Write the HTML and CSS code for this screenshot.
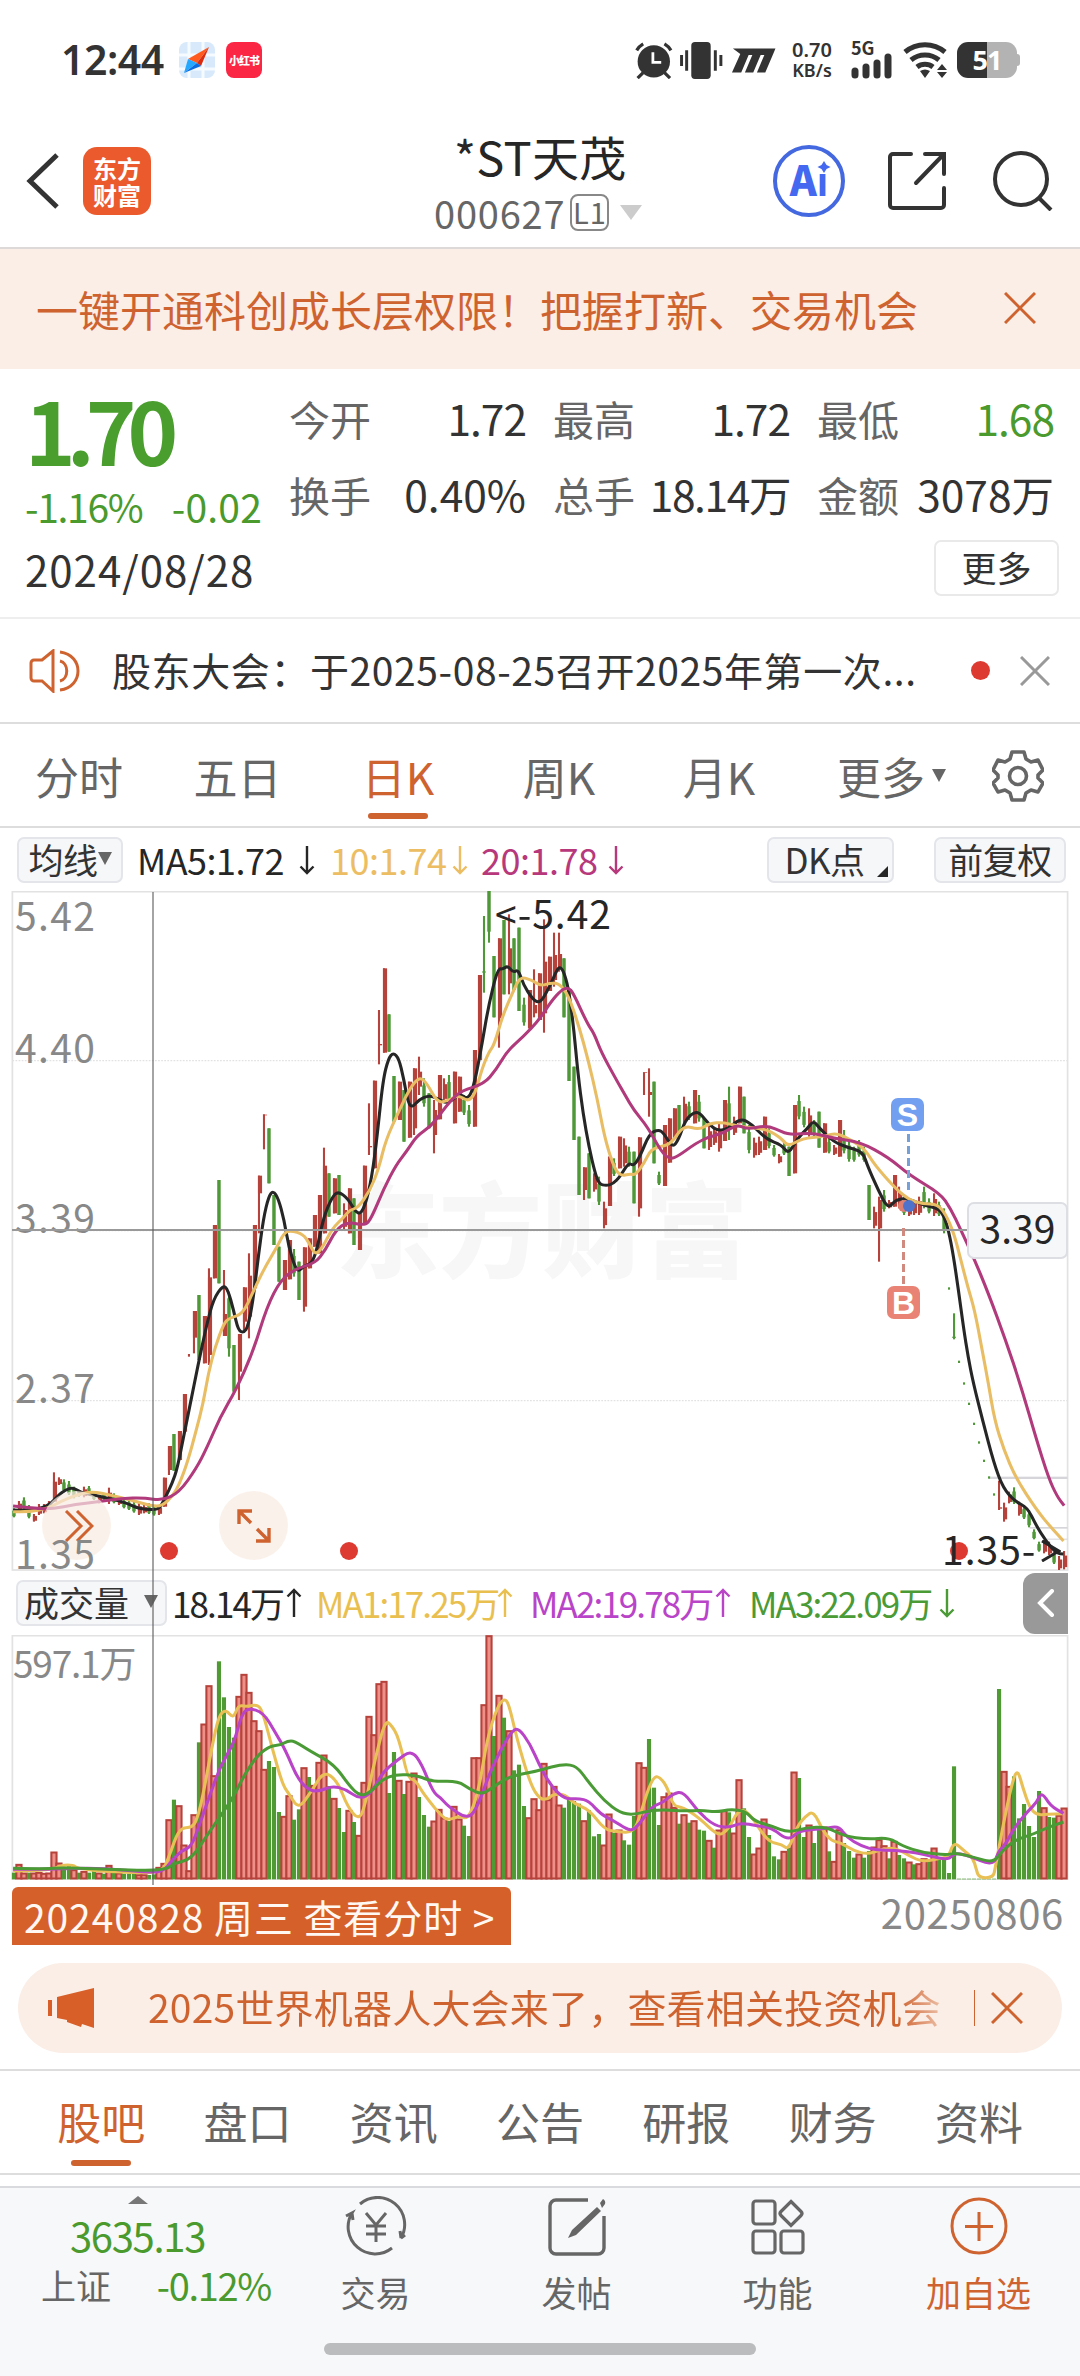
FILE: index.html
```html
<!DOCTYPE html>
<html lang="zh-CN">
    <head>
        <title>*ST天茂 000627</title>
        <meta charset="UTF-8">
        <meta name="viewport" content="width=device-width, initial-scale=1.0">
        <link rel="stylesheet" href="styles.css">
        <script src="chart.js" defer></script>
    </head>
    <body>
        <svg class="defs">
            <symbol id="down" viewBox="0 0 16 30"><path d="M8 1v27M1.500 21.500L8 28l6.500-6.500" fill="none" stroke="currentColor" stroke-width="2.400"/></symbol>
            <symbol id="up" viewBox="0 0 16 30"><path d="M8 29V2M1.500 8.500L8 2l6.500 6.500" fill="none" stroke="currentColor" stroke-width="2.400"/></symbol>
        </svg>

        <div class="statusbar">
            <div class="clock">12:44</div>
            <svg class="app-icon" viewBox="0 0 36 36">
                <rect width="36" height="36" rx="8" fill="#d7e9fa"/>
                <path d="M10 0v36M24 0v36M0 13h36M0 27h36" stroke="#f6fbff" stroke-width="3"/>
                <path d="M30 5L9 17l9 4z" fill="#ff5a1f"/>
                <path d="M30 5L18 21l4 3z" fill="#d92c10"/>
                <path d="M5 31L9 17l9 4z" fill="#26a8ff"/>
                <path d="M5 31L18 21l4 3z" fill="#0a6ce0"/>
            </svg>
            <div class="app-icon red">小红书</div>
            <svg class="status-icons" viewBox="0 0 160 40">
                <g fill="#333">
                    <circle cx="22.500" cy="21" r="17.500"/>
                    <path d="M11 33l-6 6M34 33l6 6M4 9a20 20 0 0 1 7-7M34 2a20 20 0 0 1 7 7" stroke="#333" stroke-width="3.500" fill="none"/>
                    <path d="M21.500 11v11h9" stroke="#fff" stroke-width="3" fill="none"/>
                    <rect x="63" y="0" width="21" height="40" rx="4"/>
                    <path d="M58 9v22M52.500 14v12M89 9v22M95 14v12" stroke="#333" stroke-width="3.200"/>
                    <path d="M108 7h46l-2 5-9 21h-9l8-19h-4l-8 19h-9l8-19h-4l-8 19h-10l9-20z"/>
                </g>
            </svg>
            <div class="speed"><div>0.70</div><div>KB/s</div></div>
            <div class="signal">
                <span>5G</span>
                <svg viewBox="0 0 42 26"><path d="M4 18v4M15 14v8M26 10v12M37 4v18" stroke="#333" stroke-width="7" stroke-linecap="round"/></svg>
            </div>
            <svg class="wifi" viewBox="0 0 46 38">
                <g fill="none" stroke="#333" stroke-width="5">
                    <path d="M2 11a31 31 0 0 1 40 0M8 19a22 22 0 0 1 28 0M14 26a13 13 0 0 1 16 0"/>
                </g>
                <path d="M17 30q5-3 10 0l-5 7zM34 29l5-6 5 6zM34 31l5 6 5-6z" fill="#333"/>
            </svg>
            <div class="battery"><span>51</span></div>
        </div>

        <div class="header">
            <svg class="back" viewBox="0 0 34 56"><path d="M31 2L4 28l27 26" fill="none" stroke="#333" stroke-width="5"/></svg>
            <div class="brand">东方<br>财富</div>
            <div class="stock">
                <div class="stock-name">*ST天茂</div>
                <div class="stock-code">000627<span class="level">L1</span><i class="tri"></i></div>
            </div>
            <div class="ai">
                <svg viewBox="0 0 72 72">
                    <circle cx="36" cy="36" r="34" fill="none" stroke="#4468e0" stroke-width="4"/>
                    <path d="M51 16l2.500 4 4 2-4 2-2.500 4-2.500-4-4-2 4-2z" fill="#4468f0"/>
                </svg>
                <span>Aı</span>
            </div>
            <svg class="share" viewBox="0 0 60 60"><path d="M24 3H6a3 3 0 0 0-3 3v48a3 3 0 0 0 3 3h48a3 3 0 0 0 3-3V37M38 3h19v20M56 4L29 32" fill="none" stroke="#333" stroke-width="4" stroke-linecap="round"/></svg>
            <svg class="search" viewBox="0 0 60 60"><circle cx="28" cy="28" r="26" fill="none" stroke="#333" stroke-width="4"/><path d="M45 46l13 13" stroke="#333" stroke-width="4"/></svg>
        </div>

        <div class="banner">
            <div>一键开通科创成长层权限！把握打新、交易机会</div>
            <svg class="close" viewBox="0 0 32 32"><path d="M1 1l30 30M31 1L1 31" stroke="#cf6330" stroke-width="3"/></svg>
        </div>

        <div class="quote">
            <div class="price-col">
                <div class="price">1.70</div>
                <div class="change"><span>-1.16%</span><span>-0.02</span></div>
            </div>
            <div class="stats">
                <div class="stat"><span>今开</span><b class="n">1.72</b></div>
                <div class="stat"><span>最高</span><b class="n">1.72</b></div>
                <div class="stat"><span>最低</span><b class="n green">1.68</b></div>
                <div class="stat"><span>换手</span><b>0.40%</b></div>
                <div class="stat"><span>总手</span><b class="w">18.14万</b></div>
                <div class="stat"><span>金额</span><b>3078万</b></div>
            </div>
            <div class="quote-date">2024/08/28</div>
            <div class="more-btn">更多</div>
        </div>

        <div class="notice">
            <svg class="horn" viewBox="0 0 52 44">
                <g fill="none" stroke="#cf6330" stroke-width="3">
                    <path d="M24 2L13 11H5a3 3 0 0 0-3 3v15a3 3 0 0 0 3 3h8l11 10z"/>
                    <path d="M31 12c9 2 9 18 0 20M31 3c24 3 24 35 0 38"/>
                </g>
            </svg>
            <div class="notice-text">股东大会：于2025-08-25召开2025年第一次...</div>
            <i class="red-dot"></i>
            <svg class="close-grey" viewBox="0 0 30 30"><path d="M1 1l28 28M29 1L1 29" stroke="#999" stroke-width="3"/></svg>
        </div>

        <div class="periods">
            <div>分时</div>
            <div>五日</div>
            <div class="active">日K</div>
            <div>周K</div>
            <div>月K</div>
            <div>更多<i class="tri dark"></i></div>
            <svg class="gear" viewBox="0 0 52 52">
                <path d="M20 2h12l2 7 5 3 7-2 5 10-5 5v3l5 5-5 9-7-2-5 3-2 7H20l-2-7-5-3-7 2-5-9 5-5v-3l-5-5 5-10 7 2 5-3z" fill="none" stroke="#666" stroke-width="3.600" stroke-linejoin="round"/>
                <circle cx="26" cy="26" r="8.500" fill="none" stroke="#666" stroke-width="3.600"/>
            </svg>
        </div>

        <div class="ma-row">
            <div class="chip">均线<i class="tri dark"></i></div>
            <div class="c-black">MA5:1.72</div><svg class="arr c-black"><use href="#down"/></svg>
            <div class="c-gold">10:1.74</div><svg class="arr c-gold"><use href="#down"/></svg>
            <div class="c-pink">20:1.78</div><svg class="arr c-pink"><use href="#down"/></svg>
            <div class="chip dk">DK点<i class="corner"></i></div>
            <div class="chip fq">前复权</div>
        </div>

        <div class="charts">
            <div class="kline">
                <div class="watermark">东方财富</div>
                <svg class="plot" id="kline" viewBox="0 33 3136 2040" preserveAspectRatio="none"></svg>
                <div class="round r1"><svg viewBox="0 0 30 32"><path d="M2 1l15 15L2 31M13 1l15 15-15 15" fill="none" stroke="#cf6330" stroke-width="3"/></svg></div>
                <div class="round r2"><svg viewBox="0 0 34 34"><path d="M2 15V2h13M2 2l12 12M32 19v13H19M32 32L20 20" fill="none" stroke="#cf6330" stroke-width="3.400"/></svg></div>
                <div class="axis a1">5.42</div>
                <div class="axis a2">4.40</div>
                <div class="axis a3">3.39</div>
                <div class="axis a4">2.37</div>
                <div class="axis a5">1.35</div>
                <div class="cross-h"></div>
                <div class="mark high">&lt;-5.42</div>
                <div class="cross-label">3.39</div>
                <div class="trade s">S</div>
                <div class="trade-line s"></div>
                <div class="trade b">B</div>
                <div class="trade-line b"></div>
                <div class="trade-dot b"></div>
                <div class="trade-dot s"></div>
                <i class="event e1"></i>
                <i class="event e2"></i>
                <i class="event e3"></i>
                <div class="mark low">1.35-<svg viewBox="0 0 20 22"><path d="M1 1l17 10L1 21" fill="none" stroke="#262626" stroke-width="3"/></svg></div>
            </div>
            <div class="vol-row">
                <div class="chip">成交量<i class="tri dark"></i></div>
                <div class="c-black">18.14万</div><svg class="arr c-black"><use href="#up"/></svg>
                <div class="c-yellow">MA1:17.25万</div><svg class="arr c-yellow"><use href="#up"/></svg>
                <div class="c-purple">MA2:19.78万</div><svg class="arr c-purple"><use href="#up"/></svg>
                <div class="c-green">MA3:22.09万</div><svg class="arr c-green"><use href="#down"/></svg>
                <div class="fold"><svg viewBox="0 0 18 28"><path d="M15 2L3 14l12 12" fill="none" stroke="#fff" stroke-width="4" stroke-linecap="round"/></svg></div>
            </div>
            <div class="volume">
                <svg class="plot" id="volume" viewBox="0 222 3136 735" preserveAspectRatio="none"></svg>
                <div class="axis v1">597.1万</div>
            </div>
            <div class="cross-v"></div>
        </div>

        <div class="dates">
            <div class="date-tag">20240828 周三 查看分时 &gt;</div>
            <div class="date-end">20250806</div>
        </div>

        <div class="promo">
            <svg class="speaker" viewBox="0 0 46 40"><path d="M9 9L46 0v40l-12-4-1 3-14-5v-2L9 30zM0 12h4v16H0z" fill="#d95f28"/></svg>
            <div class="promo-text">2025世界机器人大会来了，查看相关投资机会</div>
            <i class="divider"></i>
            <svg class="close" viewBox="0 0 32 32"><path d="M1 1l30 30M31 1L1 31" stroke="#cf6330" stroke-width="3"/></svg>
        </div>

        <div class="tabs">
            <div class="active">股吧</div>
            <div>盘口</div>
            <div>资讯</div>
            <div>公告</div>
            <div>研报</div>
            <div>财务</div>
            <div>资料</div>
        </div>

        <div class="bottom">
            <div class="nav">
                <div class="index">
                    <i class="tri up"></i>
                    <div class="index-value">3635.13</div>
                    <div class="index-row"><span>上证</span><span class="green">-0.12%</span></div>
                </div>
                <div class="nav-item">
                    <svg viewBox="0 0 64 60">
                        <g fill="none" stroke="#666" stroke-width="3">
                            <path d="M16 8A27 27 0 0 1 57 42l4-3M57 42l-1-7M48 52A27 27 0 0 1 8 17l-6 3M8 17l1 7"/>
                            <path d="M22 17l10 12 10-12M22 30h20M22 38h20M32 29v17"/>
                        </g>
                    </svg>
                    <div>交易</div>
                </div>
                <div class="nav-item">
                    <svg viewBox="0 0 64 60">
                        <path d="M43 4H11a6 6 0 0 0-6 6v42a6 6 0 0 0 6 6h42a6 6 0 0 0 6-6V20" fill="none" stroke="#666" stroke-width="3.400"/>
                        <path d="M55 7l3-4q3 2 2 5l-3 4zM52 11l4 4-25 24-8 3 4-8z" fill="#666"/>
                    </svg>
                    <div>发帖</div>
                </div>
                <div class="nav-item">
                    <svg viewBox="0 0 64 60">
                        <g fill="none" stroke="#666" stroke-width="3.200">
                            <rect x="7" y="5" width="22" height="23" rx="3"/>
                            <path d="M45 5.500l10 10q2 2 0 4l-10 10-10-10q-2-2 0-4z"/>
                            <rect x="7" y="35" width="22" height="22" rx="3"/>
                            <rect x="35" y="35" width="22" height="22" rx="3"/>
                        </g>
                    </svg>
                    <div>功能</div>
                </div>
                <div class="nav-item orange">
                    <svg viewBox="0 0 64 60"><path d="M32 16v29M18 30.500h28" stroke="#cf6330" stroke-width="3"/><circle cx="32" cy="30" r="27" fill="none" stroke="#cf6330" stroke-width="3"/></svg>
                    <div>加自选</div>
                </div>
            </div>
            <div class="home-bar"></div>
        </div>
    </body>
</html>
```

FILE: styles.css
```css
* {
    box-sizing: border-box;
}

body {
    margin: 0;
    width: 1080px;
    height: 2376px;
    overflow: hidden;
    background-color: #fff;
    font-family: 'Noto Sans CJK SC', sans-serif;
    font-size: 42px;
    line-height: 1;
    color: #333;
    white-space: nowrap;
}

i {
    font-style: normal;
}

svg {
    display: block;
    flex: none;
}

.defs {
    display: none;
}

.green {
    color: #4a9a2e;
}

.tri {
    display: block;
    border: 11px solid transparent;
    border-top: 15px solid #ccc;
    border-bottom: 0;
}
.tri.dark {
    border-width: 13px 7px 0 7px;
    border-top-color: #666;
}
.tri.up {
    border-width: 0 10px 8px 10px;
    border-bottom: 8px solid #777;
}

/* status bar */
.statusbar {
    display: flex;
    align-items: center;
    height: 120px;
    padding-left: 61px;
}
.clock {
    width: 118px;
    padding-bottom: 2px;
    font-family: 'Noto Sans', sans-serif;
    font-size: 41px;
    font-weight: 600;
    letter-spacing: -0.5px;
}
.app-icon {
    width: 36px;
    height: 36px;
}
.app-icon.red {
    margin-left: 11px;
    border-radius: 8px;
    background-color: #fb2544;
    color: #fff;
    font-size: 11px;
    font-weight: 900;
    line-height: 36px;
    text-align: center;
    letter-spacing: -1px;
}
.status-icons {
    width: 148px;
    height: 37px;
    margin-left: 371px;
}
.speed {
    width: 62px;
    font-family: 'Noto Sans', sans-serif;
    font-size: 20px;
    font-weight: 600;
    line-height: 20px;
    text-align: center;
}
.speed div + div {
    font-size: 18px;
}
.signal {
    width: 48px;
    margin-left: 8px;
    font-size: 18px;
    font-weight: 700;
}
.signal span {
    display: block;
    height: 12px;
    line-height: 12px;
}
.signal svg {
    width: 42px;
    height: 26px;
}
.wifi {
    width: 46px;
    height: 38px;
    margin-left: 4px;
}
.battery {
    position: relative;
    width: 60px;
    height: 36px;
    margin-left: 8px;
    border-radius: 11px;
    background: linear-gradient(90deg, #333 50%, #b3b3b3 50%);
    color: #fff;
    font-family: 'Noto Sans', sans-serif;
    font-size: 27px;
    font-weight: 700;
    line-height: 35px;
    text-align: center;
    letter-spacing: -1px;
}
.battery::after {
    content: '';
    position: absolute;
    top: 12px;
    right: -3px;
    width: 3px;
    height: 12px;
    border-radius: 0 3px 3px 0;
    background-color: #b3b3b3;
}

/* title bar */
.header {
    display: flex;
    align-items: center;
    height: 129px;
    padding: 0 27px 5px 26px;
    border-bottom: 2px solid #ddd9d8;
}
.back {
    width: 34px;
    height: 56px;
}
.brand {
    width: 68px;
    height: 68px;
    margin-left: 23px;
    padding-top: 7px;
    border-radius: 14px;
    background-color: #ea5a2c;
    color: #fff;
    font-size: 24px;
    font-weight: 700;
    line-height: 27px;
    text-align: center;
}
.stock {
    width: 320px;
    margin-left: 228px;
    padding: 3px 0 0 55px;
}
.stock-name {
    margin-left: 20px;
    font-size: 47px;
    line-height: 60px;
    letter-spacing: 0.3px;
    color: #262626;
}
.stock-code {
    display: flex;
    align-items: center;
    font-size: 38px;
    line-height: 54px;
    letter-spacing: 0.8px;
    color: #666;
}
.level {
    width: 39px;
    height: 37px;
    margin: 0 11px 0 5px;
    border: 2px solid #888;
    border-radius: 8px;
    font-size: 29px;
    line-height: 30px;
    text-align: center;
}
.ai {
    position: relative;
    width: 72px;
    height: 72px;
    margin-left: 74px;
    color: #4468f0;
    font-size: 41px;
    font-weight: 900;
    line-height: 67px;
    text-align: center;
}
.ai svg {
    position: absolute;
    top: 0;
    left: 0;
    width: 72px;
    height: 72px;
}
.share {
    width: 60px;
    height: 60px;
    margin-left: 42px;
}
.search {
    width: 60px;
    height: 60px;
    margin-left: auto;
}

.banner {
    display: flex;
    align-items: center;
    justify-content: space-between;
    height: 120px;
    padding: 0 44px 1px 36px;
    background-color: #fbeee6;
    color: #cf6330;
}
.close {
    width: 32px;
    height: 32px;
    margin-bottom: 1px;
}

/* quote */
.quote {
    display: grid;
    grid-template-columns: 264px 1fr;
    grid-template-rows: 168px 72px;
    height: 250px;
    padding: 0 24px 0 25px;
    border-bottom: 2px solid #eee;
}
.price {
    padding-top: 12px;
    color: #4a9e2d;
    font-size: 86px;
    font-weight: 600;
    line-height: 96px;
    letter-spacing: -9px;
}
.change {
    display: flex;
    justify-content: space-between;
    width: 237px;
    color: #4a9a2e;
    font-size: 39px;
    line-height: 58px;
    letter-spacing: -1.3px;
}
.change span + span {
    letter-spacing: 0.2px;
}
.stats {
    display: grid;
    grid-template-columns: 237px 237px 237px;
    grid-template-rows: 76px 76px;
    column-gap: 27px;
    padding-top: 11px;
}
.stat {
    display: flex;
    justify-content: space-between;
    align-items: center;
    color: #666;
    font-size: 41px;
}
.stat b {
    color: #333;
    font-size: 42.5px;
    font-weight: 400;
}
.stat .n {
    letter-spacing: -1px;
}
.stat .w {
    letter-spacing: -1.4px;
}
.stat b.green {
    color: #4a9a2e;
}
.quote-date {
    line-height: 64px;
    letter-spacing: 1px;
}
.more-btn {
    justify-self: end;
    width: 125px;
    height: 56px;
    margin: 3px -3px 0 0;
    border: 2px solid #e9e9e9;
    border-radius: 7px;
    font-size: 35px;
    line-height: 49px;
    text-align: center;
}

.notice {
    display: flex;
    align-items: center;
    height: 105px;
    padding: 0 30px 0 29px;
    border-bottom: 2px solid #ddd;
    font-size: 39px;
}
.horn {
    width: 52px;
    height: 44px;
}
.notice-text {
    width: 859px;
    padding: 0 0 3px 31px;
    letter-spacing: 0.6px;
}
.red-dot {
    width: 19px;
    height: 19px;
    margin-left: 31px;
    border-radius: 50%;
    background-color: #dd3b32;
}
.close-grey {
    width: 30px;
    height: 30px;
    margin-left: auto;
}

/* period tabs */
.periods {
    display: grid;
    grid-template-columns: 158px 159px 162px 160px 160px 185px 96px;
    height: 104px;
    border-bottom: 2px solid #ddd;
    color: #666;
    font-size: 44px;
    text-align: center;
}
.periods > div {
    display: flex;
    align-items: center;
    justify-content: center;
    gap: 7px;
    height: 103px;
}
.periods .active,
.tabs .active {
    position: relative;
    color: #cf6330;
}
.periods .active::after,
.tabs .active::after {
    content: '';
    position: absolute;
    left: 50%;
    bottom: 8px;
    width: 60px;
    height: 6px;
    margin-left: -30px;
    border-radius: 3px;
    background-color: #cf6330;
}
.gear {
    width: 52px;
    height: 52px;
    margin: 26px 0 0 8px;
}

.chip {
    display: flex;
    align-items: center;
    justify-content: center;
    height: 46px;
    padding-bottom: 3px;
    border: 2px solid #e3e5ea;
    border-radius: 7px;
    background-color: #f6f7f9;
    color: #333;
    font-size: 35px;
}
.ma-row,
.vol-row {
    display: grid;
    align-items: center;
    color: #262626;
    font-size: 36px;
}
.ma-row > div,
.vol-row > div {
    margin-top: -2px;
}
.ma-row > .chip,
.vol-row > .chip,
.vol-row > .fold {
    margin-top: 0;
}
.ma-row {
    grid-template-columns: 106px 14px 162px 31px 122px 29px 127px 159px 127px 40px 132px;
    height: 63px;
    padding-left: 17px;
    letter-spacing: -0.5px;
}
.ma-row > :nth-child(2) {
    grid-column: 3;
}
.ma-row .dk {
    position: relative;
    grid-column: 9;
    padding-right: 12px;
}
.ma-row .fq {
    grid-column: 11;
}
.corner {
    position: absolute;
    right: 4px;
    bottom: 4px;
    border-left: 11px solid transparent;
    border-bottom: 11px solid #262626;
}
.arr {
    width: 16px;
    height: 30px;
}
.c-gold { color: #ecbd62; }
.c-yellow { color: #e9c050; }
.c-pink { color: #b8387c; }
.c-purple { color: #b944c8; }
.c-green { color: #4a9a36; }
.c-black { color: #262626; }

/* charts */
.charts {
    position: relative;
    width: 1080px;
}
.kline,
.volume {
    position: relative;
}
.kline {
    height: 680px;
}
.volume {
    height: 245px;
}
.plot {
    position: absolute;
    top: 0;
    left: 0;
    width: 1080px;
    height: 100%;
}
.watermark {
    position: absolute;
    left: 336px;
    top: 283px;
    color: #f7f7f7;
    font-size: 103px;
    font-weight: 900;
}
.axis {
    position: absolute;
    left: 15px;
    color: #888;
    font-size: 39px;
    letter-spacing: 1.4px;
}
.a1 { top: 4px; }
.a2 { top: 136px; }
.a3 { top: 306px; }
.a4 { top: 476px; }
.a5 { top: 642px; }
.v1 {
    left: 13px;
    top: 9px;
    font-size: 37px;
    letter-spacing: -1.2px;
}
.cross-h {
    position: absolute;
    left: 12px;
    top: 338px;
    width: 956px;
    height: 2px;
    background-color: #999;
}
.cross-v {
    position: absolute;
    left: 152px;
    top: 1px;
    width: 2px;
    height: 993px;
    background-color: rgba(90, 90, 90, 0.55);
}
.mark {
    position: absolute;
    display: flex;
    align-items: center;
    color: #262626;
    font-size: 39px;
    letter-spacing: 1px;
}
.mark.high {
    left: 495px;
    top: 2px;
}
.mark.low {
    left: 942px;
    top: 638px;
}
.mark.low svg {
    width: 20px;
    height: 22px;
    margin: 5px 0 0 5px;
}
.cross-label {
    position: absolute;
    left: 967px;
    top: 311px;
    width: 101px;
    height: 57px;
    border: 2px solid #dcdee4;
    border-radius: 7px;
    background-color: #f6f7f9;
    color: #262626;
    font-size: 39px;
    line-height: 47px;
    text-align: center;
}
.trade {
    position: absolute;
    width: 33px;
    height: 33px;
    border-radius: 7px;
    color: #fff;
    font-family: 'Liberation Sans', sans-serif;
    font-size: 32px;
    font-weight: 700;
    line-height: 34px;
    text-align: center;
}
.trade.s {
    left: 891px;
    top: 207px;
    background-color: #729ff0;
}
.trade.b {
    left: 887px;
    top: 395px;
    background-color: #e88375;
}
.trade-line {
    position: absolute;
    width: 3px;
    height: 57px;
}
.trade-line.s {
    left: 907px;
    top: 243px;
    background: repeating-linear-gradient(#78a0d8 0 8px, transparent 8px 12px);
}
.trade-line.b {
    left: 902px;
    top: 337px;
    background: repeating-linear-gradient(#d18a80 0 8px, transparent 8px 12px);
}
.trade-dot {
    position: absolute;
    top: 309px;
    width: 12px;
    height: 12px;
    border-radius: 50%;
}
.trade-dot.s {
    left: 903px;
    background-color: #4f73cc;
}
.trade-dot.b {
    left: 898px;
    background-color: #e08070;
}
.round {
    position: absolute;
    top: 600px;
    display: flex;
    align-items: center;
    justify-content: center;
    width: 69px;
    height: 69px;
    border-radius: 50%;
    background-color: rgba(250, 235, 226, 0.7);
}
.r1 { left: 42px; }
.r2 { left: 219px; }
.r1 svg {
    width: 30px;
    height: 32px;
    margin-left: 5px;
}
.r2 svg {
    width: 34px;
    height: 34px;
}
.event {
    position: absolute;
    top: 651px;
    width: 18px;
    height: 18px;
    border-radius: 50%;
    background-color: #dd3b32;
}
.e1 { left: 160px; }
.e2 { left: 340px; }
.e3 { left: 950px; }

.vol-row {
    grid-template-columns: 151px 5px 114px 30px 181px 33px 185px 34px 190px 34px 1fr 45px;
    height: 64px;
    padding: 0 12px 0 16px;
    font-size: 35px;
    letter-spacing: -1.9px;
}
.vol-row .chip {
    justify-content: space-between;
    padding: 0 7px 3px 6px;
    letter-spacing: 0;
}
.vol-row > :nth-child(2) {
    grid-column: 3;
}
.fold {
    grid-column: 12;
    display: flex;
    align-items: center;
    justify-content: center;
    height: 61px;
    border-radius: 12px 0 0 12px;
    background-color: #999;
}
.fold svg {
    width: 18px;
    height: 28px;
}

.dates {
    display: flex;
    align-items: center;
    justify-content: space-between;
    height: 58px;
    margin: 7px 0 0 12px;
    padding-right: 16px;
    color: #888;
    font-size: 40px;
}
.date-tag {
    width: 499px;
    height: 58px;
    padding-left: 12px;
    border-radius: 6px 6px 0 0;
    background-color: #d66029;
    color: #fff8f2;
    font-size: 39px;
    line-height: 58px;
    letter-spacing: 0.9px;
}
.date-end {
    padding-bottom: 9px;
    letter-spacing: 0.7px;
}

.promo {
    display: flex;
    align-items: center;
    height: 90px;
    margin: 18px 18px 16px;
    padding: 0 38px 0 30px;
    border-radius: 45px;
    background-color: #fbeee6;
    color: #cf6330;
    font-size: 39px;
}
.speaker {
    width: 46px;
    height: 40px;
}
.promo-text {
    width: 826px;
    padding-bottom: 4px;
    margin-left: 54px;
    line-height: 64px;
    letter-spacing: 0.2px;
    background: linear-gradient(90deg, #cf6330 750px, #f0cdb8 800px);
    -webkit-background-clip: text;
    color: transparent;
}
.divider {
    width: 1px;
    height: 36px;
    margin-right: 16px;
    background-color: #cf6330;
}

/* content tabs */
.tabs {
    display: grid;
    grid-template-columns: repeat(7, 146.3px);
    height: 106px;
    padding-left: 28px;
    border-top: 2px solid #ddd;
    border-bottom: 2px solid #ddd;
    color: #666;
    font-size: 44px;
    line-height: 101px;
    text-align: center;
}
.tabs .active::after {
    bottom: 7px;
}

.bottom {
    height: 190px;
    margin-top: 11px;
    border-top: 2px solid #d8dade;
    background-color: #f7f8fa;
}
.nav {
    display: grid;
    grid-template-columns: 275px 201px 201px 201px 201px;
    height: 156px;
    color: #666;
    font-size: 35px;
    text-align: center;
}
.index {
    padding-top: 8px;
}
.index .tri {
    width: 20px;
    margin: 0 auto;
}
.index-value {
    margin-top: 8px;
    color: #4a9a2e;
    font-size: 40px;
    line-height: 46px;
    letter-spacing: -1.3px;
}
.index-row {
    display: flex;
    justify-content: space-between;
    padding: 3px 4px 0 41px;
    line-height: 48px;
}
.index-row .green {
    font-size: 38px;
    letter-spacing: -1.3px;
}
.nav-item svg {
    width: 64px;
    height: 60px;
    margin: 8px auto 18px;
}
.nav-item.orange {
    color: #cf6330;
}
.home-bar {
    width: 432px;
    height: 12px;
    margin: -1px auto 0;
    border-radius: 6px;
    background-color: #bbbcbe;
}
```

FILE: chart.js
```js
// one entry per trading day: colour, high, low [, body top, body bottom]
var days = `g1885,1912 r1863,1895 g1852,1890 g1875,1915 r1902,1925 r1872,1905 r1872,1900 r1863,1882 r1777,1865,1805,1865 r1792,1815
g1798,1835 g1803,1845 g1820,1855 g1830,1850 r1820,1852 g1818,1845 g1835,1860 r1845,1870 g1840,1860 r1823,1872,1838,1862
g1840,1870 r1850,1875 g1855,1885 g1860,1890 g1865,1898 r1870,1905 r1875,1900 g1870,1902 g1875,1907 r1875,1905
r1793,1880 r1698,1785,1698,1770 g1662,1772 r1653,1740 r1542,1655 r1422,1430 r1293,1420,1293,1373 g1245,1440 r1308,1450 r1165,1455,1192,1425
r1035,1195 g900,1210 r1170,1368,1302,1368 g1235,1430,1255,1405 g1395,1535 r1362,1560,1362,1475 r1222,1350,1222,1325 r1120,1375,1187,1310 r1035,1225 r887,1060,887,940
r703,808,704,706 g745,910 g945,1095 g1100,1205 r1140,1230 r1080,1198 g1107,1190 g1145,1260 r1102,1295,1102,1280 r1075,1165
r1005,1100 r945,1120 r803,1060,857,1060 g880,1010 r895,1000 g885,1005 r970,1050 r925,1060 g955,1095 r1000,1110
r857,1035 r670,825,798,802 r602,865 r390,553,492,496 r265,518 g403,515 g588,725 r605,720 g630,785 r605,773
r565,765,565,745 r530,645,575,620 g595,680 g640,745 r660,820,690,765 r585,718 r595,665 g585,670 r575,730 r590,695
g645,705 g675,740 r510,740 r285,540 g108,338,274,278 g33,188,33,155 g228,412 r175,503,175,415 g120,343 r103,343,205,310
g175,330 g143,393 g353,437 r330,445 r268,412,375,400 r280,420 r118,458,245,400 r230,333 r158,320,225,300 r158,275,222,265
g235,412 g330,603 g560,780 g770,945 r862,960,862,930 g820,955 r880,935 g890,975 r965,1045 r830,978
g835,888 r770,865 r775,860 g800,860 g815,970 r772,1010,772,985 r577,645,577,579 r565,710,636,645 g605,850 g875,915
r735,918 r715,848 r685,775 g675,765 r650,735 g665,720 r630,730 g645,725 g715,805 r735,810
r740,795 r730,815 r660,783 g620,780,670,740 r710,765 r620,730 g650,760 g735,820 r773,833 r770,825
r710,810 g745,805 g795,830 r822,850 g785,825 g800,888 r675,880 g645,718 g680,742 r685,770
g720,770 g695,803 r730,818 g775,820 r795,825 r720,830 g750,820 g780,845 g800,845 g780,830
g800,845 g915,1020 r980,1045 r950,1145,960,1045 g930,995 r960,985 r885,980 r920,985 g950,1005 r970,1008
r960,1005 r950,1005 g920,985 g955,1000 r940,1008 g965,1008 g985,1060 g1222,1229 g1300,1378,1370,1374 g1442,1449
g1507,1514 g1568,1575 g1628,1635 g1684,1691 g1739,1746 g1789,1796 g1840,1847 r1802,1890,1882,1886 r1868,1925 r1835,1870
g1822,1872 r1865,1907 g1878,1917 g1890,1942 g1948,1978 g1985,2015 r1980,2020 r1985,2025 g2015,2052 r2028,2070 r2013,2068`;

// top edge of each volume bar
var volumes = `g935 r909 r935 g935 r935 r933 r936 r935 r872 r905 g920 g915 r925 g935 r930 g935 g930 r935 g938 r912
g935 r935 g938 g938 g938 r940 r940 g942 g940 r918 r906 r775 g716 r733 r851 r928 r760 g544 r488 r373
r643 g301 g409 g498 g530 r405 r339 r393 r478 r508 r624 g600 g618 g753 r765 r703 g776 g745 r619 g648
r672 r603 r581 g675 r711 g741 g813 r747 g783 r822 r663 r465 r520 r367 r360 g696 g573 r657 g699 r660
r635 g708 g762 g797 r779 r744 r770 g780 r735 r773 g794 g825 r589 r589 r430 r223 g525 r402 g470 r508
g628 g611 g735 r769 r712 r745 r606 r715 r675 r731 g740 g715 g720 g728 r778 g748 g826 g819 r851 r758
g815 r806 g838 g851 g765 r604 r618 g534 g680 g792 r706 r695 r738 g788 r760 g785 r778 g806 g809 r837
g860 r806 r748 g754 r815 r655 g742 g828 r878 r860 r773 g822 g886 g895 r870 g860 r632 g651 g828 r791
g846 g800 r797 g871 r900 r805 g846 g870 g890 r878 g890 g870 r857 r835 r853 g892 r840 g882 g892 r902
g910 r907 r892 g900 r860 g895 g890 g936 g616 g953 g953 g953 g953 g953 g953 g953 g953 g384 r630 r675
g646 g772 g729 g795 g828 g690 r739 g768 g770 r762 r740`;

var ma = {
    ma5: '38,1890 80,1892 140,1880 170,1845 190,1830 212,1822 235,1838 270,1845 330,1858 370,1870 400,1885 447,1890 465,1883 480,1852 500,1810 515,1765 535,1660 552,1575 575,1455 600,1335 620,1257 648,1215 662,1230 678,1290 692,1352 708,1358 720,1340 735,1260 750,1130 765,1015 780,950 793,932 808,955 825,1020 838,1100 862,1178 880,1160 905,1150 920,1110 940,1010 965,950 982,934 1010,955 1040,1008 1060,980 1080,890 1095,770 1112,600 1128,535 1142,518 1158,535 1172,595 1185,670 1198,682 1215,660 1245,646 1270,655 1300,672 1335,640 1360,660 1378,610 1400,490 1418,380 1445,265 1460,268 1474,257 1490,278 1505,268 1520,315 1545,355 1562,368 1576,358 1600,310 1618,268 1625,262 1635,270 1650,320 1665,435 1678,580 1693,700 1710,800 1728,880 1740,912 1760,917 1780,912 1800,890 1825,848 1840,858 1858,830 1885,762 1912,748 1928,760 1952,803 1970,780 1990,720 2015,697 2032,698 2060,735 2085,753 2115,745 2150,715 2180,730 2225,778 2270,795 2290,823 2315,775 2345,745 2362,722 2380,745 2420,785 2460,802 2505,815 2520,860 2550,930 2578,987 2600,960 2625,955 2650,962 2690,978 2725,985 2742,1010 2755,1055 2768,1125 2783,1230 2798,1345 2811,1430 2826,1508 2853,1620 2886,1750 2913,1825 2948,1865 2983,1882 3008,1935 3038,1985 3068,2020 3088,2022',
    ma10: '38,1895 80,1897 140,1885 180,1862 230,1842 270,1835 320,1845 380,1860 440,1878 470,1878 500,1850 520,1815 545,1745 570,1650 590,1570 605,1480 625,1400 650,1330 665,1315 705,1302 735,1235 770,1160 805,1100 825,1058 845,1052 880,1062 898,1090 915,1125 935,1105 965,1045 1000,1010 1015,990 1040,983 1075,930 1100,865 1120,780 1160,690 1190,625 1218,590 1240,610 1270,668 1300,663 1330,645 1360,665 1380,640 1400,565 1420,515 1435,495 1460,405 1490,335 1510,290 1545,300 1570,318 1600,308 1625,312 1650,345 1680,435 1708,540 1735,660 1755,770 1780,855 1800,888 1830,882 1845,885 1870,850 1890,808 1920,800 1950,790 1985,735 2030,750 2060,730 2100,727 2140,738 2200,745 2230,750 2270,775 2288,800 2330,775 2390,770 2430,758 2470,780 2510,805 2540,855 2600,925 2640,960 2680,972 2720,972 2745,1000 2770,1060 2790,1140 2810,1220 2830,1290 2850,1400 2870,1510 2888,1620 2915,1710 2950,1795 3010,1890 3050,1940 3088,1983',
    ma20: '38,1878 100,1885 150,1887 220,1873 290,1865 350,1855 420,1853 470,1862 520,1838 570,1765 600,1705 640,1610 685,1530 735,1415 775,1280 815,1200 860,1165 915,1150 945,1110 975,1050 1010,1025 1060,1037 1078,1015 1115,925 1150,855 1180,815 1210,768 1250,740 1280,700 1310,660 1340,632 1405,612 1440,570 1475,510 1520,470 1565,420 1600,365 1630,330 1650,322 1665,340 1705,430 1725,460 1745,515 1790,600 1815,645 1840,690 1880,740 1920,815 1945,838 1970,828 2020,790 2060,770 2100,760 2140,733 2170,748 2220,737 2250,745 2290,765 2360,758 2420,775 2500,787 2580,832 2640,885 2730,940 2760,985 2790,1050 2828,1135 2870,1240 2920,1380 2965,1520 3010,1680 3045,1795 3070,1850 3090,1877',
    vol5: '38,930 140,930 180,912 212,912 225,922 290,930 380,935 470,935 490,890 520,800 560,800 575,765 590,700 615,560 635,465 655,445 678,473 692,432 715,437 750,430 765,460 790,560 820,670 840,700 867,745 905,690 940,630 980,660 1010,740 1045,780 1065,710 1090,590 1118,480 1135,490 1158,530 1185,655 1205,655 1230,700 1290,775 1310,775 1335,765 1360,775 1390,690 1415,530 1445,435 1465,412 1478,430 1500,530 1540,670 1568,715 1590,715 1605,700 1640,700 1670,730 1710,745 1755,805 1790,812 1840,815 1860,760 1880,690 1900,645 1918,650 1938,680 1955,735 1985,740 2030,770 2085,825 2110,810 2125,785 2140,755 2160,745 2185,770 2215,820 2240,845 2270,850 2290,867 2315,795 2340,765 2362,750 2390,810 2415,840 2440,845 2480,870 2520,880 2560,865 2600,860 2640,885 2680,903 2740,890 2755,885 2770,842 2800,870 2825,890 2835,925 2842,950 2884,950 2890,920 2915,780 2940,660 2955,625 2970,680 2990,740 3010,762 3040,760 3088,758',
    vol10: '38,925 150,925 285,920 440,935 475,930 500,898 525,870 555,858 580,790 610,700 640,615 680,545 700,465 720,440 765,455 800,515 830,570 865,655 900,690 930,690 965,675 1005,685 1045,715 1080,695 1110,635 1150,600 1195,567 1225,610 1258,695 1280,710 1300,735 1360,777 1390,730 1420,640 1455,565 1485,512 1505,500 1540,550 1565,610 1600,675 1640,715 1680,712 1710,720 1745,760 1780,778 1820,805 1840,808 1870,770 1895,735 1925,725 1955,697 1985,692 2025,750 2075,795 2120,800 2150,785 2200,795 2240,800 2290,840 2320,808 2400,803 2435,795 2460,830 2500,855 2545,868 2600,868 2660,875 2700,885 2755,897 2770,875 2810,883 2884,915 2900,870 2920,850 2945,800 2985,750 3010,725 3025,692 3050,735 3088,757',
    vol20: '38,922 130,924 180,920 320,925 475,930 510,905 555,895 600,825 640,765 680,705 710,640 750,580 785,555 815,552 835,540 855,540 900,570 970,610 1015,675 1045,705 1075,695 1110,655 1150,640 1210,643 1255,662 1330,660 1365,685 1400,700 1430,680 1465,655 1500,642 1560,630 1600,618 1650,608 1680,622 1710,665 1755,720 1800,755 1840,762 1900,745 1990,750 2040,748 2080,753 2120,745 2165,750 2190,780 2240,795 2290,815 2340,800 2400,798 2450,825 2520,835 2580,830 2620,855 2680,875 2750,882 2775,875 2830,890 2885,905 2910,870 2950,835 3000,820 3040,800 3088,783'
};

var RED = '#b5423b';
var GREEN = '#4f9838';

function dayX(i) {
    return 40.5 + 14.52 * i;
}

function rect(x, y, w, h, fill) {
    return '<rect x="' + x + '" y="' + y + '" width="' + w + '" height="' + h + '" fill="' + fill + '"/>';
}

// midpoint smoothing keeps the averages from looking angular
function line(points, color) {
    var p = points.split(' ').map(function(s) { return s.split(',').map(Number); });
    var d = 'M' + p[0];
    for (var i = 1; i < p.length - 1; i++) {
        d += 'Q' + p[i] + ' ' + (p[i][0] + p[i + 1][0]) / 2 + ',' + (p[i][1] + p[i + 1][1]) / 2;
    }
    d += 'L' + p[p.length - 1];
    return '<path d="' + d + '" fill="none" stroke="' + color + '" stroke-width="9" stroke-linejoin="round"/>';
}

function grid(y) {
    return '<path d="M36 ' + y + 'H3100" stroke="#e2e2e2" stroke-width="4" stroke-dasharray="5 4"/>';
}

function frame(y, h) {
    return '<rect x="36" y="' + y + '" width="3064" height="' + h + '" fill="none" stroke="#e2e2e2" stroke-width="5"/>';
}

function drawKline() {
    var out = frame(35, 2035) + grid(542) + grid(1052) + grid(1562);
    out += rect(2872, 1790, 228, 7, '#d6d6da') + rect(2990, 1941, 110, 5, '#d6d6da') + rect(3040, 1976, 60, 3, '#d6d6da');
    days.split(/\s+/).forEach(function(s, i) {
        var v = s.slice(1).split(',').map(Number);
        var color = s[0] == 'r' ? RED : GREEN;
        var x = dayX(i);
        var body = v.length > 2 ? [v[2], v[3]] : [v[0] + (v[1] - v[0]) * 0.25, v[1] - (v[1] - v[0]) * 0.12];
        if (v.length == 2 && v[1] - v[0] > 85) body = v;
        out += rect(x - 3, v[0], 6, v[1] - v[0], color);
        if (v[1] - v[0] > 10) out += rect(x - (s[0] == 'r' ? 3 : 5), body[0], s[0] == 'r' ? 12 : 10, body[1] - body[0], color);
    });
    out += line(ma.ma5, '#262626') + line(ma.ma10, '#e8bd64') + line(ma.ma20, '#b03a7b');
    document.getElementById('kline').innerHTML = out;
}

function drawVolume() {
    var out = frame(224, 733);
    volumes.split(/\s+/).forEach(function(s, i) {
        var y = +s.slice(1);
        var x = dayX(i);
        if (s[0] == 'r') {
            out += '<rect x="' + (x - 7.5) + '" y="' + (y + 2.5) + '" width="15" height="' + Math.max(950 - y, 3) + '" fill="#ee8f88" stroke="#b5423b" stroke-width="6"/>';
        } else {
            out += rect(x - 6, y, 12, 955 - y, '#4f9a32');
        }
    });
    out += line(ma.vol5, '#e9c055') + line(ma.vol10, '#b944c8') + line(ma.vol20, '#4a9a36');
    document.getElementById('volume').innerHTML = out;
}

drawKline();
drawVolume();
```
